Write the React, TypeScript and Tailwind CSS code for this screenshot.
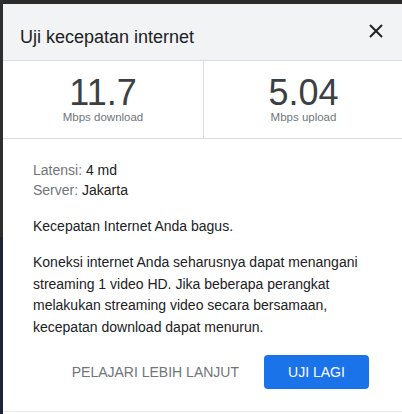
const stats = [
  { value: '11.7', label: 'Mbps download' },
  { value: '5.04', label: 'Mbps upload' },
];

export default function App() {
  return (
    <div className="flex h-[414px] w-full overflow-hidden bg-[#2b2b2b] font-['Liberation_Sans',Arial,sans-serif]">
      {/* sliver of the page behind the dialog */}
      <div className="flex w-[3px] shrink-0 flex-col">
        <div className="h-[237px] bg-[#2e2e2e]" />
        <div className="flex-1 bg-[#1d2733]" />
      </div>

      <div className="mt-[4px] flex w-[400px] shrink-0 flex-col bg-white">
        <div className="flex h-[57px] shrink-0 items-start justify-between border-b border-[#dadce0] bg-[#f1f3f4] pl-[17px] pr-[20px]">
          <h2 className="mt-[23px] text-[18px] leading-[20px] text-[#202124]">Uji kecepatan internet</h2>
          <button className="mt-[20px] flex h-[14px] w-[14px] items-center justify-center text-[#202124]">
            <svg width="14" height="14" viewBox="0 0 14 14" fill="none" stroke="currentColor" strokeWidth="2">
              <path d="M1 1L13 13M13 1L1 13" />
            </svg>
          </button>
        </div>

        <div className="grid grid-cols-2 border-b border-[#dadce0]">
          {stats.map(({ value, label }, i) => (
            <div
              key={label}
              className={`flex flex-col items-center pb-[14px] pt-[15px] ${i === 1 ? 'border-l border-[#dadce0]' : ''}`}
            >
              <span className="text-[36px] leading-[33px] text-[#3c4043]">{value}</span>
              <span className="mt-[2px] text-[11.5px] leading-[13px] text-[#70757a]">{label}</span>
            </div>
          ))}
        </div>

        <div className="flex flex-col pb-[22px] pl-[30px] pr-[34px] pt-[21px] text-[14px] text-[#202124]">
          <div className="leading-[20px]">
            <div>
              <span className="text-[#70757a]">Latensi: </span>4 md
            </div>
            <div>
              <span className="text-[#70757a]">Server: </span>Jakarta
            </div>
          </div>
          <p className="mt-4 leading-[20px]">Kecepatan Internet Anda bagus.</p>
          <p className="mt-4 leading-[21.5px]">
            Koneksi internet Anda seharusnya dapat menangani streaming 1 video HD. Jika beberapa perangkat
            melakukan streaming video secara bersamaan, kecepatan download dapat menurun.
          </p>
          <div className="mt-[17px] flex items-center justify-end gap-[25px]">
            <button className="text-[14px] text-[#70757a]">PELAJARI LEBIH LANJUT</button>
            <button className="h-[34px] w-[105px] rounded-[4px] bg-[#1a73e8] text-[14px] text-white">UJI LAGI</button>
          </div>
        </div>
        <div className="flex-1 border-t border-[#e8eaed]" />
      </div>
    </div>
  );
}
